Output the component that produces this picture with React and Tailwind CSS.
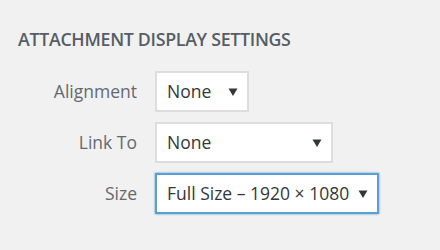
import React from 'react';

const FONT = { fontFamily: '"Open Sans", "Noto Sans", sans-serif' };

const ROWS = [
  { label: 'Alignment', value: 'None', width: 'w-[94px]' },
  { label: 'Link To', value: 'None', width: 'w-[178px]' },
  { label: 'Size', value: 'Full Size – 1920 × 1080', width: 'w-[224px]', focused: true },
];

const Arrow = () => (
  <svg width="10" height="10" viewBox="0 0 10 10" className="flex-shrink-0">
    <path d="M0.5 1.5h9L5 9z" fill="#32373c" />
  </svg>
);

const App = () => {
  return (
    <div className="w-[440px] h-[250px] bg-[#f1f1f1] overflow-hidden" style={FONT}>
      <div className="pt-[26px] pl-[18px]">
        <h2 className="text-[17.8px] leading-[26px] font-semibold text-[#555d66] tracking-[-0.3px]">
          ATTACHMENT DISPLAY SETTINGS
        </h2>
        <div className="mt-[19px] flex flex-col gap-[10px]">
          {ROWS.map((row) => (
            <div key={row.label} className="flex items-center">
              <span className="w-[120px] text-right text-[17.5px] text-[#646970] pr-[1px]">{row.label}</span>
              <div
                className={`ml-[17px] h-[41px] ${row.width} bg-white flex items-center justify-between pl-[10px] pr-[9px] border-2 ${
                  row.focused ? 'border-[#5b9dd9] shadow-[0_0_2px_rgba(30,140,190,0.8)]' : 'border-[#dddddd]'
                }`}
              >
                <span className="text-[17.5px] text-[#32373c] whitespace-nowrap">{row.value}</span>
                <Arrow />
              </div>
            </div>
          ))}
        </div>
      </div>
    </div>
  );
};

export default App;
